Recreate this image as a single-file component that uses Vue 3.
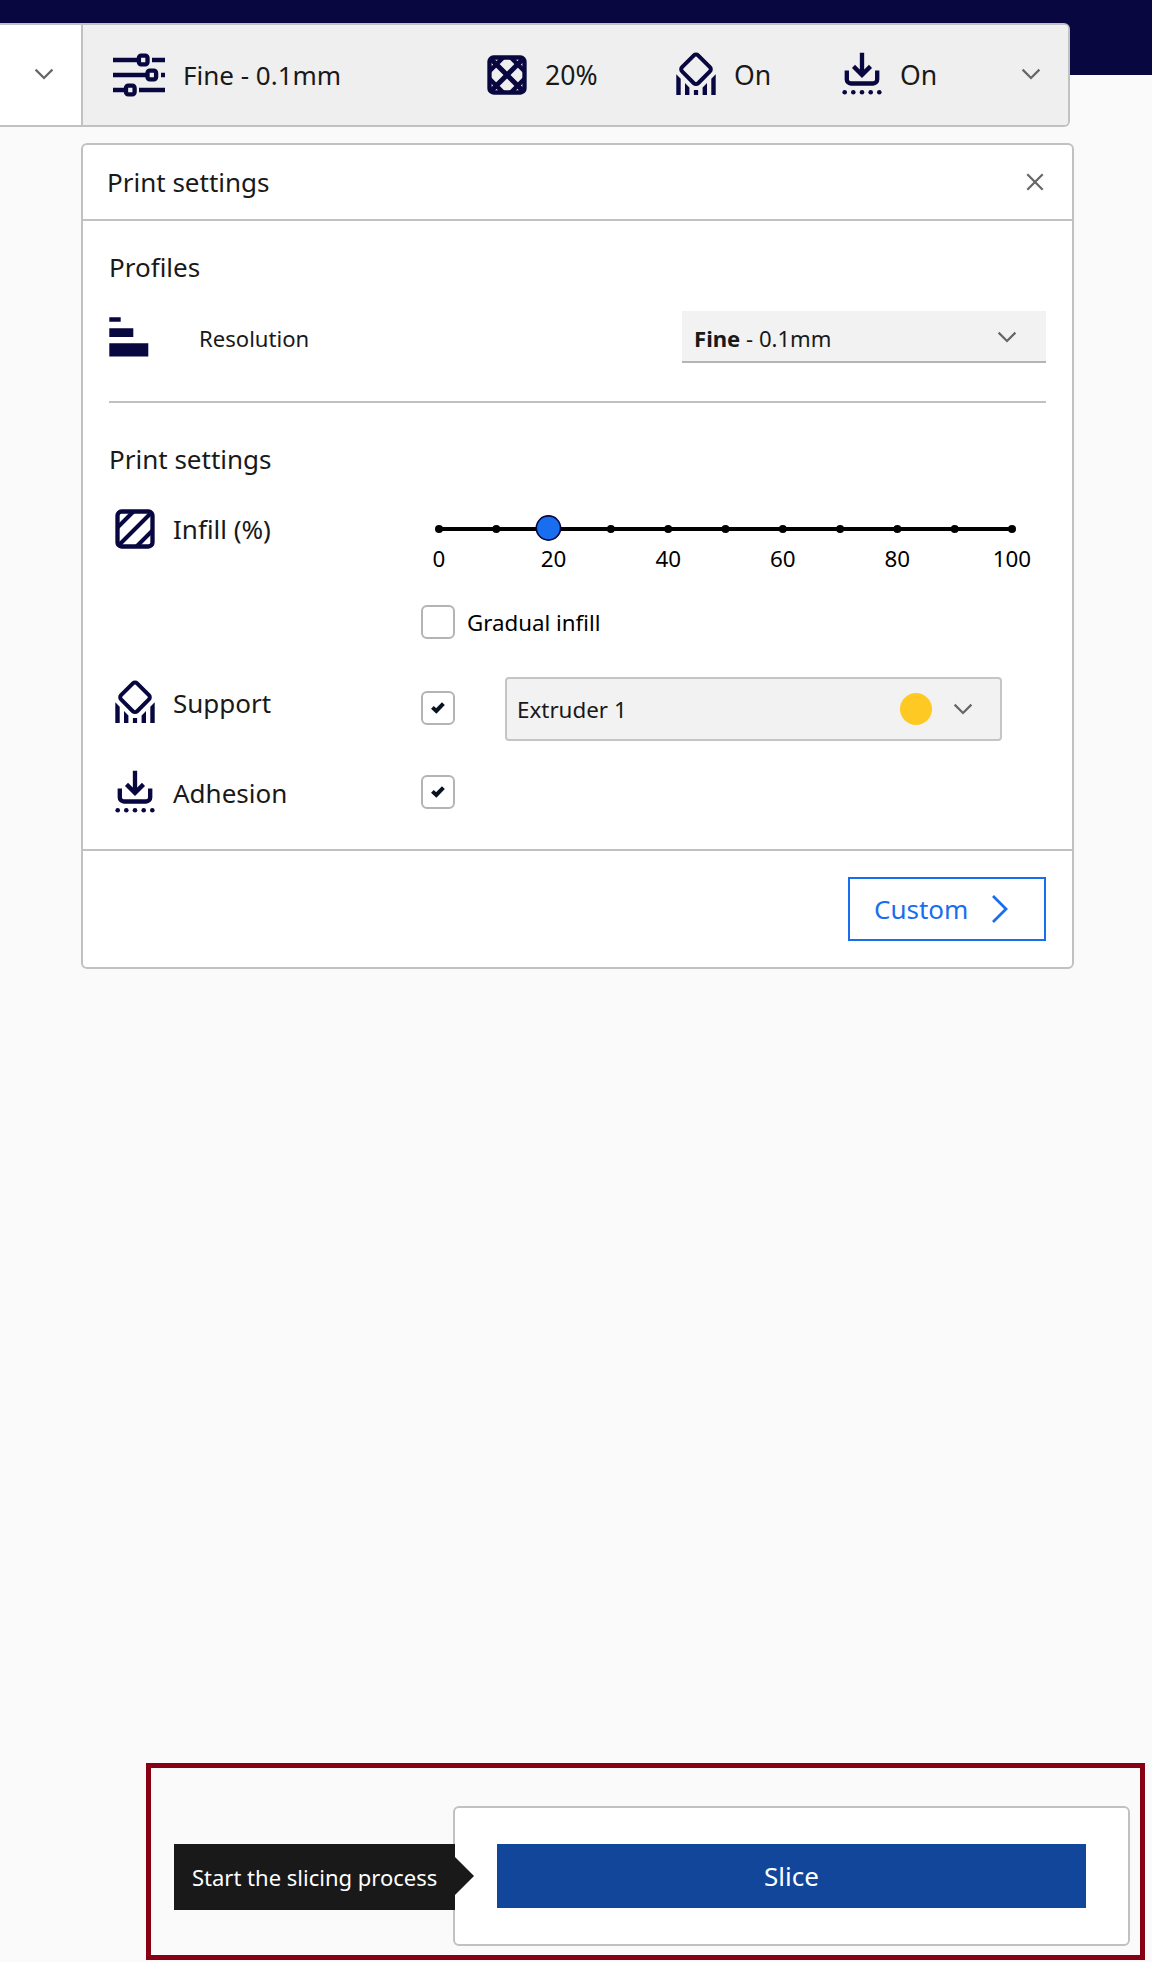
<script setup>
import { h } from 'vue'

const ticks = Array.from({ length: 11 }, (_, i) => i)
const tickLabels = [0, 20, 40, 60, 80, 100]
const infill = 19.1

const svg = (children) => h('svg', { width: 52, height: 52, viewBox: '0 0 52 52', fill: 'none', stroke: '#08073f', 'stroke-width': 4.33 }, children)

const SupportIcon = () => svg([
  h('rect', { x: 14.65, y: 8.95, width: 22.7, height: 22.7, rx: 3, transform: 'rotate(45 26 20.3)', 'stroke-width': 4 }),
  h('path', {
    stroke: 'none',
    fill: '#08073f',
    d: 'M6.3 25.3l4.4 4.4V46H6.3zM15 34.1l4.4 4.4V46H15zM23.9 41h4.2v5h-4.2zM37 34.1l-4.4 4.4V46H37zM45.7 25.3l-4.4 4.4V46h4.4z'
  })
])

const AdhesionIcon = () => svg([
  h('path', { d: 'M26 3.7V26M17.5 17.4L26 25.9l8.5-8.5' }),
  h('path', { d: 'M10.8 21.4V30.5a4 4 0 0 0 4 4h22.4a4 4 0 0 0 4-4V21.4' }),
  ...[8.7, 17.3, 26, 34.7, 43.3].map((cx) => h('circle', { cx, cy: 43.3, r: 2.3, fill: '#08073f', stroke: 'none' }))
])

const ChevronDown = () => h('svg', { width: 20, height: 12, viewBox: '0 0 20 12', fill: 'none', stroke: '#666', 'stroke-width': 2.2 }, [
  h('path', { d: 'M1.6 1.6L10 10l8.4-8.4' })
])

const CheckMark = () => h('svg', { width: 14, height: 12, viewBox: '0 0 14 12', fill: 'none', stroke: '#0a1220', 'stroke-width': 4 }, [
  h('path', { d: 'M1.4 5.4L5.3 9 12.4 1.6' })
])
</script>

<template>
  <div class="page">
    <header class="topbar">
      <div class="toolbar">
        <div class="previous"><ChevronDown /></div>
        <div class="summary">
          <div class="item profile">
            <svg width="52" height="52" viewBox="0 0 52 52" fill="none" stroke="#08073f" stroke-width="4.33">
              <path d="M0 11h25M39 11h13M0 26h33M48 26h4M0 41h12M26 41h26" />
              <rect x="25.9" y="6.7" width="8.6" height="8.6" rx="2.2" />
              <rect x="34.5" y="21.7" width="8.6" height="8.6" rx="2.2" />
              <rect x="13" y="36.7" width="8.6" height="8.6" rx="2.2" />
            </svg>
            <span>Fine - 0.1mm</span>
          </div>
          <div class="item">
            <svg width="52" height="52" viewBox="0 0 52 52" fill="none" stroke="#08073f" stroke-width="4.33">
              <rect x="8.5" y="8.5" width="35" height="35" rx="4" />
              <path d="M10 10l32 32M42 10L10 42" stroke-width="5" />
              <path d="M8.500 22.200L22.200 8.500M29.800 8.500L43.500 22.200M43.500 29.800L29.800 43.500M22.200 43.500L8.500 29.800" stroke-width="4.4" />
            </svg>
            <span class="percent">20%</span>
          </div>
          <div class="item"><SupportIcon /><span class="on">On</span></div>
          <div class="item"><AdhesionIcon /><span class="on">On</span></div>
          <ChevronDown class="summary-chevron" />
        </div>
      </div>
    </header>

    <section class="panel">
      <div class="panel-head">
        <span>Print settings</span>
        <svg width="18" height="18" viewBox="0 0 18 18" stroke="#666" stroke-width="2.2"><path d="M1.3 1.3l15.4 15.4M16.7 1.3L1.3 16.7" /></svg>
      </div>

      <div class="panel-body">
        <h2>Profiles</h2>
        <div class="resolution">
          <svg width="40" height="40" viewBox="0 0 40 40" fill="#08073f">
            <path d="M.3.3h11.4v4.4H.3zM.3 11.3h24v8.7H.3zM.3 26.3h39v13.3H.3z" />
          </svg>
          <span class="resolution-label">Resolution</span>
          <div class="select-flat">
            <span><b>Fine</b> - 0.1mm</span>
            <ChevronDown />
          </div>
        </div>
        <hr />
        <h2>Print settings</h2>

        <div class="row infill">
          <div class="label">
            <svg width="52" height="52" viewBox="0 0 52 52" fill="none" stroke="#08073f" stroke-width="4.33">
              <rect x="8.5" y="8.5" width="35" height="35" rx="4" />
              <path d="M42 10L10 42M24.500 8.500l-16 16M43.500 27.500l-16 16" stroke-width="4" />
            </svg>
            <span>Infill (%)</span>
          </div>
          <div class="control">
            <div class="slider">
              <svg width="581" height="40" viewBox="0 0 581 40">
                <path d="M4 20H577" stroke="#000" stroke-width="4" />
                <circle v-for="t in ticks" :key="t" :cx="4 + t * 57.3" cy="20" r="4" />
                <circle :cx="4 + infill * 5.73" cy="19" r="12.1" fill="#196ef0" stroke="#08073f" stroke-width="1.6" />
              </svg>
              <div class="tick-labels"><span v-for="l in tickLabels" :key="l">{{ l }}</span></div>
            </div>
            <div class="gradual"><i class="box"></i><span>Gradual infill</span></div>
          </div>
        </div>

        <div class="row support">
          <div class="label"><SupportIcon /><span>Support</span></div>
          <i class="box"><CheckMark /></i>
          <div class="select-box">
            <span>Extruder 1</span>
            <i class="material"></i>
            <ChevronDown />
          </div>
        </div>

        <div class="row adhesion">
          <div class="label"><AdhesionIcon /><span>Adhesion</span></div>
          <i class="box"><CheckMark /></i>
        </div>
      </div>

      <div class="panel-foot">
        <button class="custom">
          <span>Custom</span>
          <svg width="18" height="30" viewBox="0 0 18 30" fill="none" stroke="#196ef0" stroke-width="2.8"><path d="M2 2l13 13L2 28" /></svg>
        </button>
      </div>
    </section>

    <section class="highlight">
      <div class="tooltip">Start the slicing process</div>
      <div class="action-card"><button class="slice">Slice</button></div>
    </section>
  </div>
</template>

<style>
body {
  background: #fafafa;
}
</style>

<style scoped>
.page {
  display: flex;
  flex-direction: column;
  width: 1152px;
  height: 1962px;
  overflow: hidden;
  background: #fafafa;
  color: #191919;
  font-family: "Noto Sans", sans-serif;
  font-size: 26px;
  line-height: 40px;
  white-space: nowrap;
}
.page * {
  box-sizing: border-box;
}
svg {
  display: block;
  flex: none;
  overflow: visible;
}
.topbar {
  flex: none;
  height: 75px;
  padding-top: 23px;
  background: #08073f;
}
.toolbar {
  display: flex;
  width: 1070px;
  height: 104px;
  border: 2px solid #c0c1c2;
  border-left: 0;
  border-radius: 0 6px 6px 0;
  background: #fff;
}
.previous {
  width: 81px;
  padding: 43px 0 0 34px;
}
.summary {
  display: grid;
  grid-template-columns: 368px 189px 166px 185px 20px;
  align-items: center;
  width: 987px;
  padding-left: 30px;
  border-left: 2px solid #c0c1c2;
  border-radius: 0 4px 4px 0;
  background: #efefef;
}
.item {
  display: flex;
  align-items: center;
  gap: 12px;
}
.profile {
  gap: 18px;
}
.percent,
.on {
  font-size: 26.6px;
}
.summary-chevron {
  margin-top: -2px;
}
.panel {
  flex: none;
  display: flex;
  flex-direction: column;
  width: 993px;
  height: 826px;
  margin: 68px 0 0 81px;
  border: 2px solid #c0c1c2;
  border-radius: 6px;
  background: #fff;
}
.panel-head {
  display: flex;
  align-items: center;
  justify-content: space-between;
  height: 76px;
  padding: 0 28px 0 24px;
  border-bottom: 2px solid #c0c1c2;
}
.panel-body {
  flex: 1;
  padding: 26px 26px 0;
}
h2 {
  margin: 0;
  font-size: 26px;
  font-weight: 400;
  line-height: 40px;
}
.resolution {
  display: flex;
  align-items: center;
  height: 52px;
  margin-top: 24px;
  font-size: 22.1px;
}
.resolution-label {
  margin-left: 50px;
  padding-top: 2px;
}
.select-flat {
  display: flex;
  align-items: center;
  justify-content: space-between;
  width: 364px;
  height: 52px;
  margin-left: auto;
  padding: 2px 29px 0 12px;
  border-bottom: 2px solid #b4b4b4;
  background: #f2f2f2;
}
.select-flat span {
  padding-top: 2px;
}
hr {
  height: 2px;
  margin: 38px 0 36px;
  border: 0;
  background: #c0c1c2;
}
.row {
  display: flex;
  align-items: flex-start;
}
.label {
  display: flex;
  align-items: center;
  gap: 12px;
  width: 312px;
  height: 52px;
}
.infill {
  height: 136px;
  margin-top: 24px;
}
.slider {
  width: 581px;
  padding-top: 6px;
  margin-left: 14px;
}
.tick-labels {
  display: flex;
  justify-content: space-between;
  margin: 0 4px;
  color: #000;
  font-size: 22.4px;
  line-height: 20px;
}
.tick-labels span {
  display: flex;
  justify-content: center;
  width: 0;
}
.gradual {
  display: flex;
  align-items: center;
  gap: 12px;
  height: 34px;
  margin-top: 36px;
  color: #000;
  font-size: 22.3px;
}
.gradual span,
.select-box span {
  padding-top: 2px;
}
.box {
  display: flex;
  flex: none;
  align-items: center;
  justify-content: center;
  width: 34px;
  height: 34px;
  border: 2px solid #b4b4b4;
  border-radius: 6px;
  background: #fff;
}
.support {
  height: 64px;
  margin-top: 38px;
}
.support .box {
  margin-top: 14px;
}
.select-box {
  display: flex;
  align-items: center;
  width: 497px;
  height: 64px;
  margin-left: 50px;
  padding: 0 27px 0 10px;
  border: 2px solid #c5c5c5;
  border-radius: 4px;
  background: #f2f2f2;
  font-size: 22.4px;
}
.material {
  width: 32px;
  height: 32px;
  margin: 0 21px 0 auto;
  border-radius: 50%;
  background: #ffc924;
}
.adhesion {
  margin-top: 26px;
}
.adhesion .box {
  margin-top: 8px;
}
.panel-foot {
  display: flex;
  align-items: center;
  justify-content: flex-end;
  height: 118px;
  padding-right: 26px;
  border-top: 2px solid #c0c1c2;
}
button {
  margin: 0;
  border-radius: 0;
  font: inherit;
}
.custom {
  display: flex;
  align-items: center;
  gap: 23px;
  width: 198px;
  height: 64px;
  padding: 0 0 0 24px;
  border: 2px solid #196ef0;
  background: #fff;
  color: #196ef0;
}
.highlight {
  display: flex;
  flex: none;
  width: 999px;
  height: 197px;
  margin: 794px 0 0 146px;
  padding: 38px 0 0 23px;
  border: 5px solid #870014;
}
.tooltip {
  position: relative;
  z-index: 1;
  width: 281px;
  height: 66px;
  margin-top: 38px;
  padding-left: 18px;
  background: #191919;
  color: #fff;
  font-size: 22px;
  line-height: 66px;
}
.tooltip::after {
  content: "";
  position: absolute;
  top: 13px;
  left: 281px;
  border: 19px solid transparent;
  border-left-color: #191919;
  border-right: 0;
}
.action-card {
  width: 677px;
  height: 140px;
  margin-left: -2px;
  padding: 36px 42px;
  border: 2px solid #c0c1c2;
  border-radius: 6px;
  background: #fff;
}
.slice {
  width: 589px;
  height: 64px;
  padding: 0;
  border: 0;
  background: #11469b;
  color: #fff;
}
</style>
